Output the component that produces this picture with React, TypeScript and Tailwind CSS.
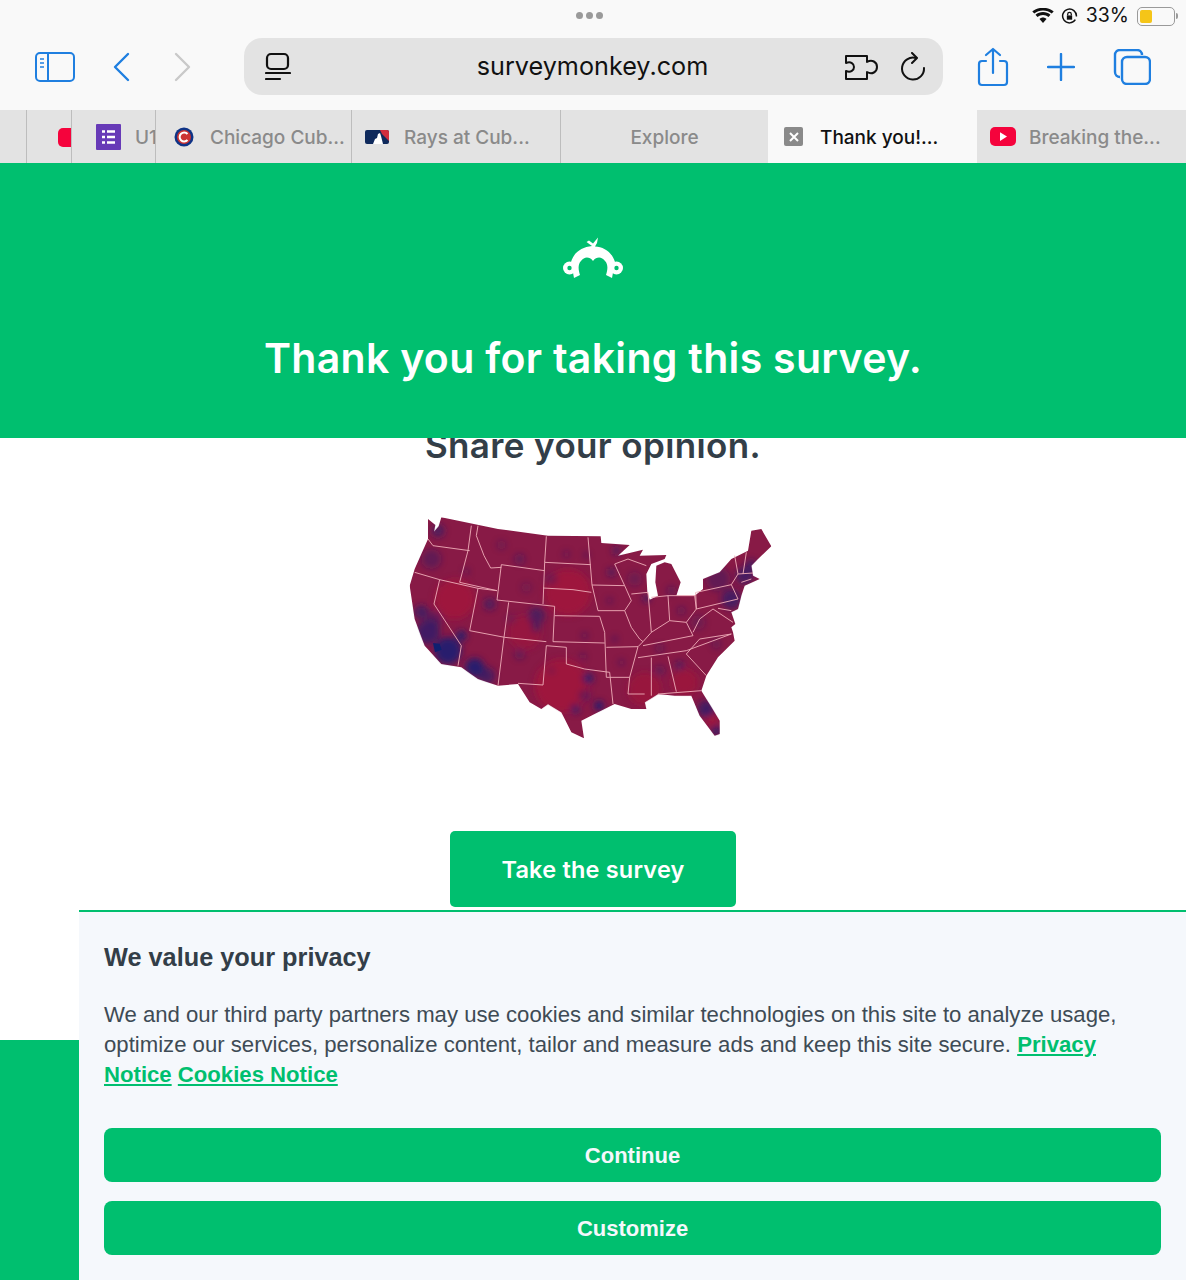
const outline =
  'M90 300 L112 318 L108 338 L122 322 L130 295 L300 330 L450 350 L608 352 L610 372 L695 378 L660 410 L735 392 L725 410 L805 408 L800 420 L760 435 L745 465 L748 520 L755 542 L780 530 L772 490 L775 440 L800 430 L820 435 L848 490 L835 530 L890 530 L915 510 L915 480 L965 460 L1000 420 L1050 395 L1060 335 L1090 330 L1120 382 L1080 420 L1060 440 L1065 470 L1085 480 L1040 500 L1030 530 L1020 570 L1000 580 L1012 615 L1000 625 L1005 640 L1010 665 L960 715 L925 770 L910 815 L965 905 L965 945 L950 950 L905 890 L880 830 L830 830 L780 825 L740 850 L745 870 L700 870 L650 855 L600 880 L550 905 L558 958 L520 940 L490 880 L450 855 L430 870 L395 850 L360 795 L300 800 L240 780 L190 745 L130 735 L80 680 L50 600 L35 500 L50 450 L90 360 Z'

const stateLines = [
  'M90 360 L105 380 L215 395',
  'M220 320 L210 395 L185 490',
  'M50 460 L125 482 L240 508 L297 515',
  'M185 490 L297 515',
  'M240 320 L235 350 L258 410 L278 447 L310 445',
  'M310 437 L440 455',
  'M310 437 L297 543 L470 562 L465 668 L620 672',
  'M125 482 L108 555 L190 680 L180 740',
  'M240 508 L215 635 L320 655 L445 668',
  'M332 550 L318 655 L300 800',
  'M445 352 L440 430 L578 437',
  'M570 355 L582 498 L600 575',
  'M440 430 L435 555',
  'M435 507 L525 512 L580 520',
  'M470 590 L605 592 L620 640 L625 775 L635 775',
  'M600 575 L680 575 L700 625 L725 660 L735 668 L720 683 L625 685',
  'M445 680 L505 685 L505 735 L560 750 L635 760 L645 855',
  'M445 680 L435 798 L360 793',
  'M720 683 L695 775 L635 775',
  'M695 775 L690 825 L740 825',
  'M582 498 L680 500 L700 545 L680 575',
  'M680 500 L650 435 L690 420 L745 440',
  'M700 525 L750 520',
  'M750 520 L760 640 L735 668',
  'M760 535 L810 530 L815 605 L760 640',
  'M810 530 L890 530 L895 570 L865 610 L815 605',
  'M735 680 L885 650 L865 610',
  'M720 716 L865 695 L1000 645',
  'M760 716 L760 830',
  'M810 712 L835 818',
  'M865 705 L925 770',
  'M780 825 L910 815',
  'M865 705 L905 660 L1000 645',
  'M885 640 L905 600 L945 570 L1005 610',
  'M895 520 L1000 497 L1020 540 L895 570 L893 520',
  'M1010 410 L1020 465',
  'M1045 400 L1035 465',
  'M1000 497 L1020 465 L1065 462',
  'M1030 490 L1060 480',
  'M960 568 L1000 575',
]

// darker, bluer population patches on the map: [x, y, radius, opacity]
const blobs: [number, number, number, number][] = [
  [150, 695, 40, 0.95], [90, 640, 36, 0.7], [70, 580, 22, 0.6], [110, 600, 24, 0.4],
  [230, 745, 28, 0.95], [265, 770, 26, 0.6], [190, 650, 16, 0.85], [275, 555, 18, 0.55],
  [415, 590, 26, 0.55], [415, 625, 14, 0.55], [570, 778, 16, 0.85], [603, 860, 14, 1],
  [532, 870, 14, 0.7], [560, 830, 18, 0.4], [925, 870, 26, 0.7], [955, 935, 14, 0.85],
  [1040, 470, 26, 0.65], [1000, 540, 30, 0.65], [1060, 440, 18, 0.65], [960, 480, 36, 0.35],
  [745, 538, 10, 0.8], [640, 460, 12, 0.55], [655, 395, 12, 0.55], [120, 335, 20, 0.55],
  [100, 420, 30, 0.35], [845, 740, 14, 0.55], [785, 755, 16, 0.35], [365, 705, 16, 0.35],
  [460, 480, 18, 0.3], [365, 420, 16, 0.35], [310, 378, 14, 0.25], [505, 405, 10, 0.3],
  [565, 408, 9, 0.35], [385, 505, 16, 0.2], [340, 600, 14, 0.25], [560, 650, 10, 0.35],
  [635, 545, 10, 0.3], [650, 660, 10, 0.3], [850, 575, 12, 0.35], [785, 688, 12, 0.35],
  [900, 610, 22, 0.25], [955, 675, 14, 0.3], [555, 712, 10, 0.35], [670, 730, 10, 0.3],
  [820, 515, 14, 0.35], [710, 480, 22, 0.25], [205, 458, 10, 0.3], [460, 755, 10, 0.3],
]

function UsMap() {
  return (
    <svg viewBox="0 0 1170 990" className="h-[330px] w-[390px]">
      <defs>
        <clipPath id="usa">
          <path d={outline} />
        </clipPath>
        <filter id="soft" x="-20%" y="-20%" width="140%" height="140%">
          <feGaussianBlur stdDeviation="9" />
        </filter>
      </defs>
      <g clipPath="url(#usa)">
        <rect width="1170" height="990" fill="#881a46" />
        <g filter="url(#soft)">
          <circle cx="510" cy="520" r="70" fill="#9e163c" />
          <circle cx="170" cy="540" r="60" fill="#9e163c" />
          <circle cx="490" cy="800" r="80" fill="#9e163c" />
          <circle cx="740" cy="810" r="50" fill="#98173e" />
          <circle cx="380" cy="640" r="50" fill="#96183f" />
          <circle cx="860" cy="790" r="40" fill="#9a173d" />
          <circle cx="940" cy="900" r="16" fill="#a8163a" />
          {blobs.map(([cx, cy, r, o]) => (
            <circle key={`${cx}-${cy}`} cx={cx} cy={cy} r={r} fill="#221f70" opacity={o} />
          ))}
        </g>
        <path d="M105 672 l20 2 l6 18 l-20 8 Z" fill="#0f2070" />
      </g>
      <g fill="none" stroke="#edaab6" strokeWidth="2.800" strokeLinejoin="round">
        {stateLines.map((d) => (
          <path key={d} d={d} />
        ))}
      </g>
    </svg>
  )
}

function MonkeyLogo() {
  return (
    <svg viewBox="0 0 62 44" className="h-[44px] w-[62px]" fill="#ffffff">
      <path d="M30 9 L24.500 5 L27 3.500 L31 6.500 L36 0.500 L35 6 L33 9.500 C42 10 50 15 53 25 L50 41 L44 38 C46 32 46 27 43 24 C40 20 35 19 31 24 C27 19 22 20 19 24 C16 27 16 32 18 38 L12 41 L9 25 C12 15 20 10 30 9 Z" />
      <circle cx="7.500" cy="31" r="6.500" />
      <circle cx="54.500" cy="31" r="6.500" />
      <circle cx="7.500" cy="31" r="2.200" fill="#00bf6f" />
      <circle cx="54.500" cy="31" r="2.200" fill="#00bf6f" />
    </svg>
  )
}

const strokeBlue = '#1f7fe0'

function Toolbar() {
  return (
    <div className="relative h-[110px] bg-[#f9f9f9] font-['Inter',sans-serif]">
      <div className="flex h-[32px] items-center justify-end pr-[8px]">
        <svg viewBox="0 0 22 16" className="h-[16px] w-[22px]" fill="#111111">
          <path d="M11 15 L7.500 11 C9.500 9 12.500 9 14.500 11 Z" />
          <path d="M5.500 9 L3.500 6.800 C7.500 3 14.500 3 18.500 6.800 L16.500 9 C13.500 6.200 8.500 6.200 5.500 9 Z" />
          <path d="M2.300 5.600 L0.300 3.500 C6 -1.500 16 -1.500 21.700 3.500 L19.700 5.600 C15 1.500 7 1.500 2.300 5.600 Z" />
        </svg>
        <svg viewBox="0 0 16 16" className="ml-[7px] h-[17px] w-[17px]" fill="none" stroke="#111111">
          <path d="M13.500 11 A6.500 6.500 0 1 1 14.500 8" strokeWidth="1.400" />
          <rect x="5.500" y="7" width="5" height="4" fill="#111111" stroke="none" />
          <path d="M6.300 7 V5.800 a1.700 1.700 0 0 1 3.400 0 V7" strokeWidth="1.200" />
        </svg>
        <span className="ml-[8px] text-[19.500px] leading-none text-[#111111]">33%</span>
        <div className="ml-[8px] flex h-[19px] w-[38px] items-center rounded-[5px] border border-[#9a9a9a] p-[2px]">
          <div className="h-full w-[12px] rounded-[2px] bg-[#f5c518]" />
        </div>
        <div className="ml-[1px] h-[6px] w-[2px] rounded-r bg-[#9a9a9a]" />
      </div>
      <div className="absolute left-[576px] top-[12px] flex gap-[3px]">
        <div className="h-[7px] w-[7px] rounded-full bg-[#9a9a9a]" />
        <div className="h-[7px] w-[7px] rounded-full bg-[#9a9a9a]" />
        <div className="h-[7px] w-[7px] rounded-full bg-[#9a9a9a]" />
      </div>

      <div className="mt-[6px] flex h-[57px] items-center pl-[35px]">
        <svg viewBox="0 0 40 32" className="h-[32px] w-[40px]" fill="none" stroke={strokeBlue} strokeWidth="2">
          <rect x="1" y="2" width="38" height="28" rx="4" />
          <path d="M13 2 V30" />
          <path d="M5 8 H9 M5 12 H9 M5 16 H9" strokeWidth="1.500" />
        </svg>
        <svg viewBox="0 0 20 32" className="ml-[37px] h-[32px] w-[20px]" fill="none" stroke={strokeBlue} strokeWidth="2.400" strokeLinecap="round" strokeLinejoin="round">
          <path d="M16 3 L3 16 L16 29" />
        </svg>
        <svg viewBox="0 0 20 32" className="ml-[40px] h-[32px] w-[20px]" fill="none" stroke="#c9c9c9" strokeWidth="2.400" strokeLinecap="round" strokeLinejoin="round">
          <path d="M4 3 L17 16 L4 29" />
        </svg>
        <div className="ml-[52px] flex h-[57px] w-[699px] items-center rounded-[18px] bg-[#e3e3e3] pl-[21px] pr-[17px]">
          <svg viewBox="0 0 26 30" className="h-[30px] w-[26px]" fill="none" stroke="#111111" strokeWidth="2.200" strokeLinecap="round">
            <rect x="2" y="2" width="21" height="15" rx="4" />
            <path d="M1 21 H25 M1 27 H15" />
          </svg>
          <div className="flex-1 pl-[50px] text-center text-[25.200px] leading-none text-[#111111]">
            surveymonkey.com
          </div>
          <svg viewBox="0 0 34 28" className="h-[28px] w-[34px]" fill="none" stroke="#111111" strokeWidth="2" strokeLinejoin="round">
            <path d="M2 3 H23 V9 C28 6 33 9 33 14 C33 19 28 22 23 19 V26 H2 V18 C7 20 10 17 10 14 C10 11 7 8 2 10 Z" />
          </svg>
          <svg viewBox="0 0 26 30" className="ml-[22px] h-[30px] w-[26px]" fill="none" stroke="#111111" strokeWidth="2" strokeLinecap="round" strokeLinejoin="round">
            <path d="M16 6 A11 11 0 1 0 24 16" />
            <path d="M12 1 L17 6 L12 11" />
          </svg>
        </div>
        <svg viewBox="0 0 32 40" className="ml-[34px] h-[40px] w-[32px]" fill="none" stroke={strokeBlue} strokeWidth="2.200" strokeLinecap="round" strokeLinejoin="round">
          <path d="M9 14 H5 A3 3 0 0 0 2 17 V35 A3 3 0 0 0 5 38 H27 A3 3 0 0 0 30 35 V17 A3 3 0 0 0 27 14 H23" />
          <path d="M16 26 V2 M9 8 L16 2 L23 8" />
        </svg>
        <svg viewBox="0 0 28 28" className="ml-[38px] h-[28px] w-[28px]" fill="none" stroke={strokeBlue} strokeWidth="2.400" strokeLinecap="round">
          <path d="M14 1 V27 M1 14 H27" />
        </svg>
        <svg viewBox="0 0 38 36" className="ml-[38px] h-[36px] w-[38px]" fill="none" stroke={strokeBlue} strokeWidth="2.400">
          <path d="M7 28 A5 5 0 0 1 2 23 V6 A5 5 0 0 1 7 1 H24 A5 5 0 0 1 29 6" />
          <rect x="9" y="8" width="28" height="27" rx="5" />
        </svg>
      </div>
    </div>
  )
}

function Favicon({ kind }: { kind: 'form' | 'cubs' | 'mlb' | 'close' | 'yt' }) {
  if (kind === 'form') {
    return (
      <svg viewBox="0 0 25 26" className="h-[26px] w-[25px] shrink-0">
        <rect width="25" height="26" rx="1" fill="#673ab7" />
        <path d="M6 7.500 H9 M11 7.500 H19 M6 13 H9 M11 13 H19 M6 18.500 H9 M11 18.500 H19" stroke="#ffffff" strokeWidth="2.600" />
      </svg>
    )
  }
  if (kind === 'cubs') {
    return (
      <svg viewBox="0 0 20 20" className="h-[20px] w-[20px] shrink-0">
        <circle cx="10" cy="10" r="9.500" fill="#0e3386" />
        <circle cx="10" cy="10" r="7" fill="#cc3433" />
        <path d="M13.500 7 A4.500 4.500 0 1 0 13.500 13" fill="none" stroke="#ffffff" strokeWidth="2" />
      </svg>
    )
  }
  if (kind === 'mlb') {
    return (
      <svg viewBox="0 0 24 14" className="h-[14px] w-[24px] shrink-0">
        <rect width="24" height="14" rx="2" fill="#0f2a5c" />
        <path d="M15 0 H22 A2 2 0 0 1 24 2 V11 L20 7 L17 4 Z" fill="#d22d3d" />
        <path d="M8 14 L10 9 L12 8 L13 4 L15 3 L16 6 L18 14 Z" fill="#ffffff" />
      </svg>
    )
  }
  if (kind === 'close') {
    return (
      <div className="flex h-[19px] w-[19px] shrink-0 items-center justify-center rounded-[2px] bg-[#8a8a8a]">
        <svg viewBox="0 0 10 10" className="h-[10px] w-[10px]" stroke="#ffffff" strokeWidth="2">
          <path d="M1 1 L9 9 M9 1 L1 9" />
        </svg>
      </div>
    )
  }
  return (
    <div className="flex h-[19px] w-[26px] shrink-0 items-center justify-center rounded-[5px] bg-[#f5033c]">
      <svg viewBox="0 0 8 10" className="h-[9px] w-[7px]" fill="#ffffff">
        <path d="M0 0 L8 5 L0 10 Z" />
      </svg>
    </div>
  )
}

function TabStrip() {
  const divider = 'border-r border-[#bdbdbd]'
  const label = 'whitespace-nowrap pt-[2px] text-[19px] font-medium leading-none text-[#8a8a8a]'
  return (
    <div className="flex h-[53px] bg-[#e3e3e3] font-['Inter',sans-serif]">
      <div className={`w-[27px] ${divider}`} />
      <div className={`flex w-[45px] justify-end overflow-hidden pt-[18px] ${divider}`}>
        <div className="h-[19px] w-[13px] rounded-l-[5px] bg-[#f5033c]" />
      </div>
      <div className={`flex w-[84px] items-center gap-[14px] overflow-hidden pl-[24px] ${divider}`}>
        <Favicon kind="form" />
        <span className={label}>U1</span>
      </div>
      <div className={`flex w-[196px] items-center gap-[16px] pl-[18px] ${divider}`}>
        <Favicon kind="cubs" />
        <span className={label}>Chicago Cub...</span>
      </div>
      <div className={`flex w-[209px] items-center gap-[15px] pl-[13px] ${divider}`}>
        <Favicon kind="mlb" />
        <span className={label}>Rays at Cub...</span>
      </div>
      <div className="flex w-[207px] items-center justify-center">
        <span className={label}>Explore</span>
      </div>
      <div className="flex w-[209px] items-center gap-[17px] bg-[#f9f9f9] pl-[16px]">
        <Favicon kind="close" />
        <span className={`${label} text-[#111111]`}>Thank you!...</span>
      </div>
      <div className="flex flex-1 items-center gap-[13px] pl-[13px]">
        <Favicon kind="yt" />
        <span className={label}>Breaking the...</span>
      </div>
    </div>
  )
}

export default function App() {
  return (
    <div className="relative h-[1280px] w-[1186px] overflow-hidden bg-white font-['Liberation_Sans',sans-serif]">
      <Toolbar />
      <TabStrip />

      <div className="relative z-10 flex h-[275px] flex-col items-center bg-[#00bf6f] font-['Inter',sans-serif]">
        <div className="mt-[74px]">
          <MonkeyLogo />
        </div>
        <h1 className="mt-[49px] text-[41px] font-semibold leading-[56px] tracking-[0.3px] text-white">
          Thank you for taking this survey.
        </h1>
      </div>

      <div className="mt-[-16px] flex flex-col items-center font-['Inter',sans-serif]">
        <h2 className="text-[35px] font-semibold leading-[46px] tracking-[0.37px] text-[#333e48]">
          Share your opinion.
        </h2>
        <div className="mt-[-49px]">
          <UsMap />
        </div>
        <button className="mt-[82px] h-[76px] w-[286px] rounded-[5px] bg-[#00bf6f] pt-[2px] text-[23.500px] font-semibold tracking-[0.2px] text-white">
          Take the survey
        </button>
      </div>

      <div className="mt-[133px] h-[240px] bg-[#00bf6f]" />

      {/* cookie banner */}
      <div className="absolute bottom-0 left-[79px] right-0 top-[910px] border-t-2 border-[#00bf6f] bg-[#f5f8fc] px-[25px] pt-[29px]">
        <h3 className="text-[25.300px] font-bold leading-[32px] text-[#333e48]">We value your privacy</h3>
        <p className="mt-[27px] text-[22.150px] leading-[30px] text-[#3e4b55]">
          We and our third party partners may use cookies and similar technologies on this site to analyze usage,
          optimize our services, personalize content, tailor and measure ads and keep this site secure.{' '}
          <a className="font-bold text-[#00bf6f] underline">Privacy</a>{' '}
          <a className="font-bold text-[#00bf6f] underline">Notice</a>{' '}
          <a className="font-bold text-[#00bf6f] underline">Cookies Notice</a>
        </p>
        <button className="mt-[38px] block h-[54px] w-full rounded-[8px] bg-[#00bf6f] text-[22px] font-bold text-[#f5f8fc]">
          Continue
        </button>
        <button className="mt-[19px] block h-[54px] w-full rounded-[8px] bg-[#00bf6f] text-[22px] font-bold text-[#f5f8fc]">
          Customize
        </button>
      </div>
    </div>
  )
}
